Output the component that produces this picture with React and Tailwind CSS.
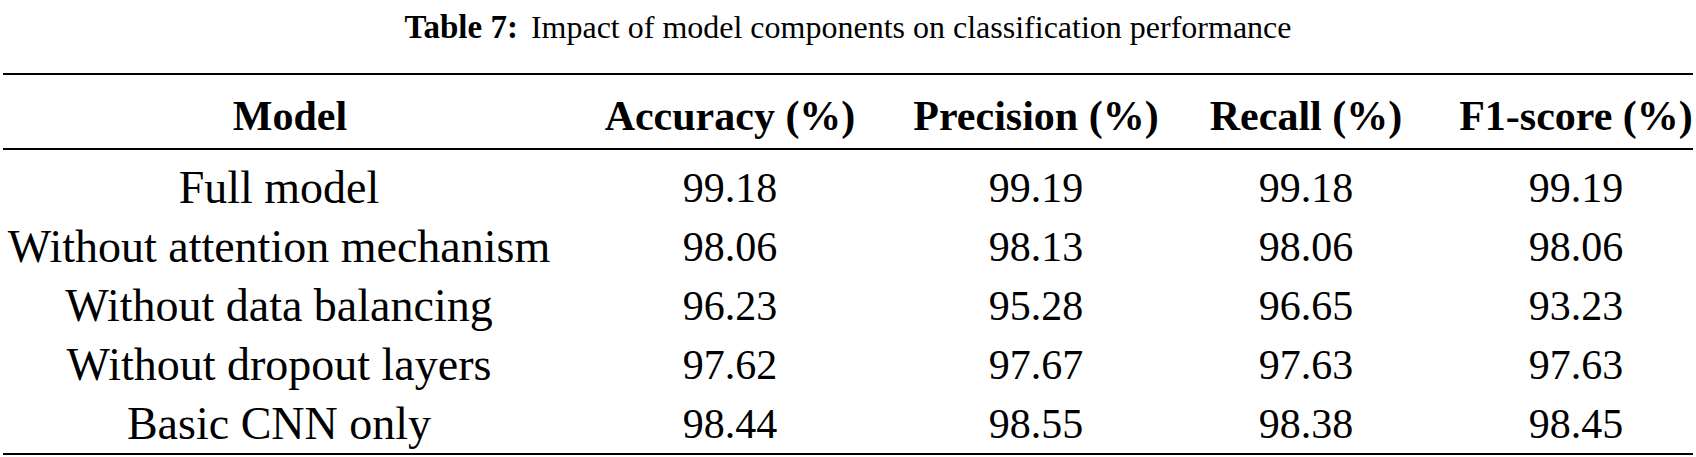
const rows = [
  ["Full model", "99.18", "99.19", "99.18", "99.19"],
  ["Without attention mechanism", "98.06", "98.13", "98.06", "98.06"],
  ["Without data balancing", "96.23", "95.28", "96.65", "93.23"],
  ["Without dropout layers", "97.62", "97.67", "97.63", "97.63"],
  ["Basic CNN only", "98.44", "98.55", "98.38", "98.45"],
];

const headers = ["Accuracy (%)", "Precision (%)", "Recall (%)", "F1-score (%)"];

const gridCols = "grid grid-cols-[558px_344px_268px_272px_268px]";
const serif = "font-['Liberation_Serif',serif]";

export default function App() {
  return (
    <div className={`h-[457px] w-[1696px] overflow-hidden bg-white text-black ${serif}`}>
      <div className="flex h-[54px] items-center justify-center text-[32px] leading-none">
        <span className="text-[33px] font-bold">Table 7:</span>
        <span className="ml-[13px]">Impact of model components on classification performance</span>
      </div>

      <div className="mx-[3px] mt-[19px] border-t-2 border-black" />

      <div className={`${gridCols} h-[73px] items-center pt-[8px] text-[42px] font-bold leading-none`}>
        <div className="pl-[22px] text-center">Model</div>
        {headers.map((h) => (
          <div key={h} className="text-center">
            {h}
          </div>
        ))}
      </div>

      <div className="mx-[3px] border-t-2 border-black" />

      <div className="pt-[8px]">
        {rows.map((row) => (
          <div key={row[0]} className={`${gridCols} h-[59px] items-center leading-none`}>
            <div className="text-center text-[46px]">{row[0]}</div>
            {row.slice(1).map((cell, i) => (
              <div key={i} className="text-center text-[42px]">
                {cell}
              </div>
            ))}
          </div>
        ))}
      </div>

      <div className="mx-[3px] border-t-2 border-black" />
    </div>
  );
}
